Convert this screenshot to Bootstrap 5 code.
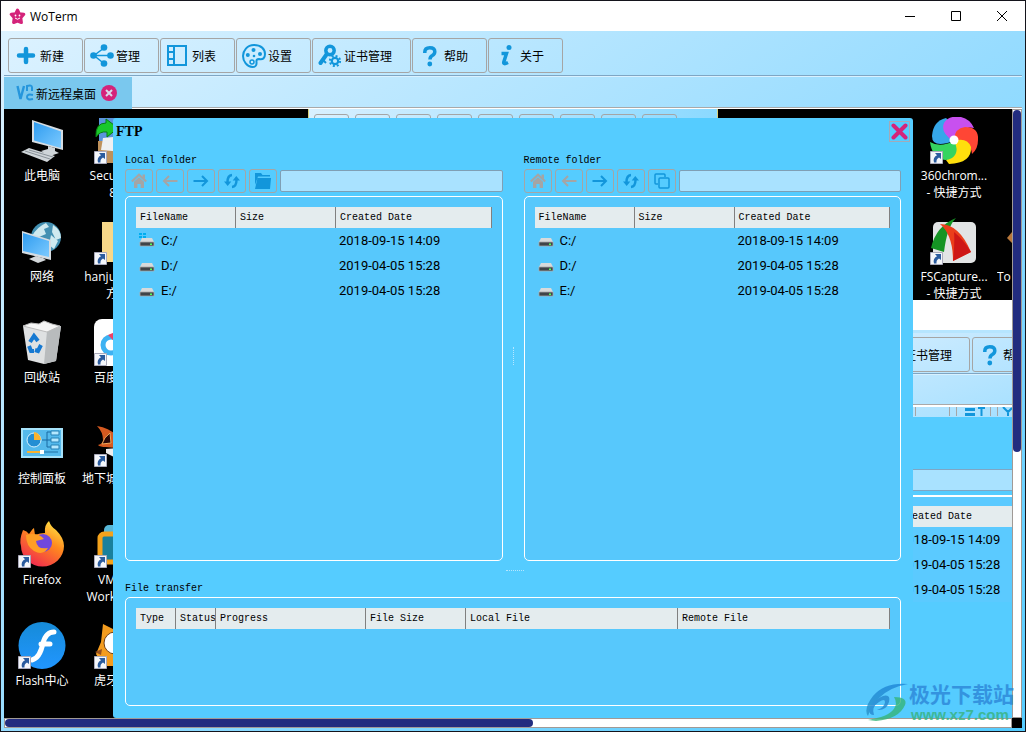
<!DOCTYPE html>
<html lang="zh-CN">
<head>
<meta charset="utf-8">
<meta name="viewport" content="width=device-width, initial-scale=1">
<title>WoTerm</title>
<link href="https://cdn.jsdelivr.net/npm/bootstrap@5.3.0/dist/css/bootstrap.min.css" rel="stylesheet">
<style>
:root { --blue: #1296db; --pink: #d4237a; --sky: #55ccff; --navy: #222c7f; }
body { font: 12px/17px "Noto Sans", "Noto Sans CJK SC", sans-serif; color: #000; }
svg { display: block; flex: none; }
button { padding: 0; }
.app-window { border: 1px solid #14141c; }
.title-bar { height: 30px; background: #fff; font-family: "Open Sans", sans-serif; font-size: 12px; padding: 0 0 0 8px; }
.caption-btn { width: 46px; height: 30px; border: 0; background: none; display: flex; align-items: center; justify-content: center; }
.app-body { background: linear-gradient(to bottom right, #ddf2ff, #97dcff 50%, #55ccff); padding: 0 3px 3px 3px; }
.tool-bar { padding: 7px 4px 2px; gap: 1px; border-bottom: 1px solid #7fa6c4; box-shadow: 0 1px #d9f1ff; margin-bottom: 1px; }
.tool-btn { width: 75px; height: 35px; border: 1px solid #a5a5a5; border-radius: 3px; background: none; color: #000; display: flex; align-items: center; gap: 2px; padding-left: 5px; white-space: nowrap; flex: none; font-family: "Noto Sans CJK SC", sans-serif; }
.tool-btn.wide { width: 99px; }
.tab-strip { height: 32px; border-bottom: 1px solid #fff; box-shadow: inset 0 -1px #a9a9a9; }
.tab-item { width: 128px; height: 32px; background: #7ac8ee; padding-left: 12px; gap: 2px; }
.tab-item a { color: #000; text-decoration: none; font-family: "Noto Sans CJK SC", sans-serif; }
.bare-btn { border: 0; background: none; margin-left: 3px; }
.screen { background: #000; min-height: 0; }
.v-track { width: 10px; background: #fff; border: 1px solid #a09a96; flex: none; }
.h-track { height: 10px; background: #fff; border: 1px solid #a09a96; }
.v-thumb { height: 342px; background: var(--navy); border-radius: 4px; }
.h-thumb { width: 52.5%; height: 8px; background: var(--navy); border-radius: 4px; }
.corner { width: 10px; height: 10px; background: #000; }
.shortcuts { position: absolute; top: 8px; width: 76px; color: #fff; text-align: center; font-family: "Open Sans", "Noto Sans CJK SC", sans-serif; white-space: nowrap; }
.shortcuts.first { left: 0; }
.shortcuts.second { left: 76px; }
.shortcuts.right { right: 20px; }
.shortcuts.edge { right: 0; width: 15px; overflow: hidden; text-align: left; }
.shortcuts.second span { display: block; width: 38px; text-align: right; }
.shortcuts.second span.latin { width: 36px; }
.shortcut { height: 101px; }
.shortcut svg { margin: 0 auto 2px; }
.remote-strip { position: absolute; left: 304px; top: 0; width: 410px; height: 14px; gap: 6px; padding: 5px 0 0 5px; overflow: hidden; border-left: 1px solid #d8d27c; border-right: 1px solid #d8d27c; background: linear-gradient(to right, #d8f0ff, #8bd9ff); }
.remote-strip i { width: 35px; height: 20px; border: 1px solid #a5a5a5; border-radius: 3px; flex: none; }
.remote-window { position: absolute; right: 0; top: 191px; bottom: 0; width: 116px; overflow: hidden; background: var(--sky); }
.remote-title { height: 30px; background: #fff; }
.remote-tools { background: linear-gradient(160deg, #cdebff, #a6e0ff); height: 87px; border-top: 3px solid #b6e5ff; }
.remote-tools .tool-bar { padding: 4px 0 1px; gap: 2px; }
.remote-tools .tool-btn { padding-left: 7px; }
.remote-tools .tool-btn.text-only { width: 74px; }
.remote-tools .tool-btn.cut { padding-left: 5px; gap: 1px; }
.remote-tabs { height: 32px; border-bottom: 2px solid #fff; box-shadow: inset 0 -1px #a9a9a9; }
.remote-field { height: 22px; border-top: 1px solid #7fa6c4; border-bottom: 1px solid #7fa6c4; background: #a9e2ff; margin-top: 52px; }
.remote-group { margin-top: 4px; border-top: 2px solid #fff; background: #5bcaff; padding-top: 9px; }
.remote-group .file-table th { border-right: 0; }
.ftp-window { position: absolute; left: 109px; right: 99px; top: 9px; bottom: 0; background: var(--sky); border-radius: 3px; padding: 0 12px 12px; }
.ftp-head { height: 33px; margin: 0 -9px; padding-top: 3px; font: bold 14px/22px "Liberation Serif", serif; }
.close-box { width: 21px; height: 21px; border: 1px solid #a3aab8; background: none; display: flex; align-items: center; justify-content: center; }
.mono, .file-table th { font-family: "Liberation Mono", monospace; font-size: 10px; font-weight: 400; }
.caption-line { height: 18px; line-height: 20px; }
.nav-tools { height: 24px; gap: 3px; margin-bottom: 3px; }
.nav-btn { width: 28px; height: 24px; border: 1px solid #a5a5a5; border-radius: 3px; background: none; color: var(--blue); display: flex; align-items: center; justify-content: center; flex: none; }
.nav-btn:disabled { color: #a5a5a5; }
.path-box { height: 22px; min-width: 0; border: 1px solid #7f9fb5; border-radius: 2px; background: #a9e2ff; padding: 0 4px; }
.group { border: 1px solid #fff; border-radius: 5px; background: #57c8fc; padding: 10px; }
.file-table { table-layout: fixed; width: 100%; border-collapse: separate; border-spacing: 0; white-space: nowrap; }
.file-table th { height: 21px; line-height: 21px; padding: 0 0 0 4px; background: #e4ecee; border-right: 1px solid #808080; overflow: hidden; }
.file-table td { height: 25px; padding: 0 0 0 3px; font-family: "Roboto", sans-serif; font-size: 13px; }
.file-table td .name { display: flex; align-items: center; gap: 6px; }
.w-40 { width: 40px; } .w-100px { width: 100px; } .w-150 { width: 150px; }
.v-split { width: 21px; flex: none; } .h-split { height: 18px; }
.v-split i { height: 18px; border-left: 1px dotted #b5e6ff; } .h-split i { width: 18px; border-top: 1px dotted #b5e6ff; margin-left: 4px; }
.transfer { height: 109px; }
.watermark { position: absolute; right: 11px; bottom: 8px; opacity: .8; gap: 1px; }
.mark-name { font: bold 21px/26px "Noto Sans CJK SC", sans-serif; color: #2c86d8; }
.mark-url { font: bold 15px/17px "Liberation Sans", sans-serif; color: #37b37e; padding-left: 2px; }
</style>
</head>
<body>
<svg width="0" height="0" class="position-absolute" aria-hidden="true">
  <defs>
    <linearGradient id="scr" x1="0" y1="0" x2="1" y2="1"><stop offset="0" stop-color="#2f9cf0"/><stop offset="1" stop-color="#7ccaff"/></linearGradient>
    <linearGradient id="fox" x1=".9" y1="0" x2=".3" y2="1"><stop offset="0" stop-color="#fff04a"/><stop offset=".45" stop-color="#ff8a1e"/><stop offset="1" stop-color="#f0284f"/></linearGradient>
    <linearGradient id="flash" x1="0" y1="0" x2="0" y2="1"><stop offset="0" stop-color="#168bd8"/><stop offset="1" stop-color="#2196ff"/></linearGradient>
    <linearGradient id="swirl" x1="0" y1="0" x2="0" y2="1"><stop offset="0" stop-color="#1e86d8"/><stop offset="1" stop-color="#2a93c8"/></linearGradient>
    <symbol id="arrow" viewBox="0 0 13 13"><path fill="#f4f6fa" stroke="#aab" d="M.5.5h12v12H.5z"/><path fill="#2a5b9e" d="M5 2h6v6L9 6.500Q6 8 6.500 11.500H4Q2.500 6.500 7 4.300z"/></symbol>
    <symbol id="home" viewBox="0 0 16 16"><path fill="none" stroke="currentColor" stroke-width="2.200" d="M.8 8.500 8 1.800l7.200 6.700"/><path fill="currentColor" d="M3 8.800 8 4.200l5 4.600V15H9.600v-4H6.400v4H3zM11.500 1.500H14V6l-2.500-2z"/></symbol>
    <symbol id="back" viewBox="0 0 16 16"><path fill="none" stroke="currentColor" stroke-width="2" d="M15.500 8H2M7 3 2 8l5 5"/></symbol>
    <symbol id="next" viewBox="0 0 16 16"><path fill="none" stroke="currentColor" stroke-width="2" d="M.5 8H14M9 3l5 5-5 5"/></symbol>
    <symbol id="sync" viewBox="0 0 16 16"><path fill="none" stroke="currentColor" stroke-width="2.400" d="M8 2Q3.500 2.500 3.500 9M8 14q4.500-.5 4.500-7"/><path fill="currentColor" d="M0 8.500h7.300L3.700 13zM8.700 7.500H16L12.300 3z"/></symbol>
    <symbol id="folder" viewBox="0 0 16 16"><path fill="currentColor" d="M0 0h6l1.500 2H15v1.500H3L0 12zM2.500 5H16l-1 11H0z"/></symbol>
    <symbol id="copy" viewBox="0 0 16 16"><path fill="none" stroke="currentColor" stroke-width="1.500" d="M4 11H2Q1 11 1 10V2q0-1 1-1h8q1 0 1 1v2M6 5h8q1 0 1 1v8q0 1-1 1H6q-1 0-1-1V6q0-1 1-1z"/></symbol>
    <symbol id="drive" viewBox="0 0 16 16"><path fill="#d8dadb" d="M3 5h10l2 4H1z"/><path fill="#404448" stroke="#aaa" stroke-width=".8" d="M1 9h14v4H1z"/><path fill="#5f5" d="M11 10.500h2V12h-2z"/></symbol>
    <symbol id="question" viewBox="0 0 24 24"><path fill="none" stroke="#1296db" stroke-width="3.500" d="M6.800 9V8q0-4.300 5-4.300 5 0 5 4 0 2.300-2.500 3.800-2.300 1.300-2.300 4"/><circle cx="11.800" cy="20" r="2.400" fill="#1296db"/></symbol>
  </defs>
</svg>

<div class="app-window d-flex flex-column vh-100 position-relative overflow-hidden">
  <header class="title-bar d-flex align-items-center">
    <svg width="17" height="17" viewBox="0 0 17 17"><path fill="#d4237a" stroke="#d4237a" stroke-width="3" stroke-linejoin="round" d="m8.500 2 1.800 3.700 4.500.6-3 3.500.6 4.700-3.900-1.500-3.900 1.500.6-4.700-3-3.500 4.500-.6z"/><circle cx="6.500" cy="7.500" r=".9" fill="#fff"/><circle cx="10.500" cy="7.500" r=".9" fill="#fff"/><path d="M6 10q2.500 2.500 5 0" stroke="#fff" fill="none"/></svg>
    <span class="ms-1 me-auto">WoTerm</span>
    <button class="caption-btn" aria-label="最小化"><svg width="12" height="12"><path stroke="#000" d="M1 6.500h10"/></svg></button>
    <button class="caption-btn" aria-label="最大化"><svg width="12" height="12"><path stroke="#000" fill="none" d="M1.500 1.500h9v9h-9z"/></svg></button>
    <button class="caption-btn" aria-label="关闭"><svg width="12" height="12"><path stroke="#000" d="m1 1 10 10M11 1 1 11"/></svg></button>
  </header>

  <div class="app-body d-flex flex-column flex-grow-1">
    <nav class="tool-bar d-flex">
      <button class="tool-btn"><svg width="24" height="24"><path stroke="#1296db" stroke-width="4.500" stroke-linecap="round" d="M12 5v13M5 11.500h14"/></svg>新建</button>
      <button class="tool-btn"><svg width="24" height="24"><path stroke="#1296db" stroke-width="1.500" fill="none" d="M14 4 4 11.500l10 8M4 11.500h17"/><g fill="#1296db"><circle cx="14" cy="3.500" r="3.300"/><circle cx="3.500" cy="11.500" r="3.300"/><circle cx="20.500" cy="11.500" r="3.300"/><circle cx="14" cy="19.500" r="3.300"/></g></svg>管理</button>
      <button class="tool-btn"><svg width="24" height="24"><path stroke="#1296db" stroke-width="2" fill="none" d="M2 2h18v19H2zM8 2v19M2 8h6M2 15h6"/></svg>列表</button>
      <button class="tool-btn"><svg width="24" height="24"><path stroke="#1296db" stroke-width="2" fill="none" d="M12 1c7 0 11 4 11 9 0 4-2 6-6 5q-3 0-2.500 3 .5 5-4 5C5 23 1 17 1 12S5 1 12 1z"/><g fill="#1296db"><circle cx="11.500" cy="6" r="2"/><circle cx="5.800" cy="11" r="2"/><circle cx="18" cy="10" r="2"/><circle cx="12" cy="12" r="1.300"/></g><circle cx="10" cy="18" r="2" stroke="#1296db" stroke-width="1.500" fill="none"/></svg>设置</button>
      <button class="tool-btn wide"><svg width="24" height="24"><path stroke="#1296db" stroke-width="4" fill="none" stroke-linecap="round" d="M8.500 10.500 2.500 19"/><circle cx="12" cy="6.500" r="4.200" stroke="#1296db" stroke-width="3.500" fill="none"/><path stroke="#1296db" stroke-width="2" d="m5 16 3 3"/><circle cx="17" cy="17" r="3.200" fill="none" stroke="#1296db" stroke-width="2.200"/><circle cx="17" cy="17" r="5.100" fill="none" stroke="#1296db" stroke-width="2" stroke-dasharray="2 2"/></svg>证书管理</button>
      <button class="tool-btn"><svg width="24" height="24"><use href="#question"/></svg>帮助</button>
      <button class="tool-btn"><svg width="24" height="24"><circle cx="15" cy="3.500" r="2.500" fill="#1296db"/><path stroke="#1296db" stroke-width="3.500" fill="none" d="M7.500 9.500h5L9.800 18q-.8 3 4.200.5"/></svg>关于</button>
    </nav>

    <div class="tab-strip d-flex mx-0">
      <div class="tab-item d-flex align-items-center">
        <svg width="18" height="18" fill="none" stroke="#2596dc" stroke-width="2.400"><path d="m1.500 2 3 13L8 2"/><path stroke-width="2" d="M11 7V2q5-1.500 5 1.500V7M17 11q-6-1.500-6 2t6 2"/></svg>
        <a href="#">新远程桌面</a>
        <button class="bare-btn" aria-label="关闭标签"><svg width="16" height="16"><circle cx="8" cy="8" r="8" fill="#d4237a"/><path stroke="#d9d9ea" stroke-width="2" d="m5 5 6 6M11 5l-6 6"/></svg></button>
      </div>
    </div>

    <div class="d-flex flex-grow-1">
      <main class="screen position-relative flex-grow-1 overflow-hidden">
        <div class="shortcuts first">
          <div class="shortcut"><svg width="48" height="48"><path fill="#d7dde2" d="m14 3 31 10v20L14 25z"/><path fill="url(#scr)" d="m16 5 27 9.500V31L16 23.500z"/><path fill="#cfd5d9" d="m30 29 7 2v3l4 2-9 3-9-5 7-2zM3 35l8-4 26 8-8 6z"/><path stroke="#8a9299" d="m7 34 25 8M11 33l24 7"/></svg><span>此电脑</span></div>
          <div class="shortcut"><svg width="48" height="48"><circle cx="28" cy="19" r="15" fill="#4390b2"/><path fill="#cfeaf0" d="M14 18q5-9 14-13l3 4-5 2 2 5-7 3-2 5zM35 7q8 5 8 13l-5 2-4-8zM33 17l7 6-4 8-5-4z"/><path fill="#d5dce2" d="m4 13 29 9v20L4 35z"/><path fill="url(#scr)" d="m5 15 26 8v16L5 33z"/><path fill="#d3d7da" d="m18 38 7 2 3 2-8 3-9-4z"/></svg><span>网络</span></div>
          <div class="shortcut"><svg width="48" height="48"><path fill="#dfe1e2" d="m5 7 38 0-5 35-12 3-16-4z"/><path fill="#b8bbbd" d="m29 12 14-5-5 35-12 3z"/><path fill="#f6f6f6" stroke="#bbb" d="m5 7 8-3 8 1 5-3 8 3 8 2-13 6z"/><path fill="none" stroke="#1679d2" stroke-width="4" d="m12 23 4-6 4 5M23 26l-3 6-3-1M11 27l2 5h3"/></svg><span>回收站</span></div>
          <div class="shortcut"><svg width="48" height="48"><path fill="#54b9ec" stroke="#a6e2fa" stroke-width="2" d="M4 9h40v28H4z"/><circle cx="16" cy="20" r="7" fill="#248ed3" stroke="#d7f3ff"/><path fill="#f9b32f" d="M16 20v-8a8 8 0 0 1 7 8z"/><path stroke="#196ba3" fill="none" d="M24 20h5v-8h4M29 20h4M29 20v7h4"/><path fill="#b4e8ff" stroke="#2781b5" d="M33 11h8v4h-8zM33 18h8v4h-8zM33 25h8v4h-8z"/><path stroke="#f9b32f" stroke-width="2" d="M9 32h14"/><path stroke="#1f70a4" d="M24 32h16"/><path fill="#fff" d="M22 30h4v4h-4z"/></svg><span>控制面板</span></div>
          <div class="shortcut"><svg width="48" height="48"><path fill="url(#fox)" d="M5 9q4 1 6 4 4-6 5-6l1 7q5-2 10-2-1-8 4-12 2 6 7 9 8 8 8 16a21 20 0 0 1-43 0Q1 19 5 9z"/><circle cx="25" cy="22" r="9" fill="#7148dd"/><path fill="#ff9e25" d="M8 14q12-3 18 4l-8 2q1 9 12 7-5 8-14 3Q8 25 8 14z"/><use href="#arrow" y="34" width="13" height="13"/></svg><span>Firefox</span></div>
          <div class="shortcut"><svg width="48" height="48"><circle cx="24" cy="23.500" r="23.500" fill="url(#flash)"/><path fill="none" stroke="#fff" stroke-width="5" stroke-linecap="round" d="M36 10q-8 0-11 11-3 15-11 17M23 22h9"/><use href="#arrow" y="34" width="13" height="13"/></svg><span>Flash中心</span></div>
        </div>
        <div class="shortcuts second">
          <div class="shortcut"><svg width="48" height="48"><path fill="#5a94dc" d="M5 1h40v30H5z"/><path fill="#be915b" d="M4 24h42v22H4z"/><path fill="#eef0f2" d="m9 21 20-2v16L7 33z"/><path fill="#19c82a" stroke="#087c12" d="M2 20Q1 6 12 6V2l12 9-11 9v-5q-7-1-11 5z"/><use href="#arrow" y="34" width="13" height="13"/></svg><span class="latin">Secu</span><span class="latin">8</span></div>
          <div class="shortcut"><svg width="48" height="48"><path fill="#f7d889" d="M8 4h26v40H8z"/><use href="#arrow" y="34" width="13" height="13"/></svg><span class="latin">hanju</span><span>方</span></div>
          <div class="shortcut"><svg width="48" height="48"><rect width="48" height="47" rx="8" fill="#fff"/><circle cx="17" cy="26" r="8" fill="none" stroke="#3eb2f2" stroke-width="5"/><path fill="#ee4266" d="m14 16 7-3v10z"/><use href="#arrow" y="34" width="13" height="13"/></svg><span>百度</span></div>
          <div class="shortcut"><svg width="48" height="48"><path fill="#d65a20" d="M3 6q12 2 19 9v13l-10-1q-6 0-8-2 5-1 5-5 0-8-6-14z"/><path fill="#270606" stroke="#f1a85a" d="M8 24q2-7 8-11l1 10z"/><path fill="#eee" d="m12 29 12-1-4 9-8-4z"/><use href="#arrow" y="34" width="13" height="13"/></svg><span>地下城</span></div>
          <div class="shortcut"><svg width="48" height="48"><rect x="10" y="4" width="28" height="28" rx="5" fill="#57b7d7"/><rect x="6" y="13" width="34" height="28" rx="4" fill="#19809c" stroke="#f4a21b" stroke-width="5"/><use href="#arrow" y="34" width="13" height="13"/></svg><span class="latin">VM</span><span class="latin">Work</span></div>
          <div class="shortcut"><svg width="48" height="48"><path fill="#f39c1f" d="m9 2 12 6h22v36H9L2 32l5-12z"/><circle cx="21" cy="21" r="11" fill="#fff" stroke="#713e12"/><path fill="#96501f" d="m1 30 7-3-1 6z"/><use href="#arrow" y="34" width="13" height="13"/></svg><span>虎牙</span></div>
        </div>
        <div class="shortcuts right">
          <div class="shortcut"><svg width="48" height="48"><path fill="#36a7e9" d="M24 24Q2 32 2 19 3 4 16 1l8 8z"/><path fill="#c850ef" d="M23 24Q10 15 14 6q5-8 17-6 9 2 13 11-12-3-16 11z"/><path fill="#ff4635" d="M25 24q-2-12 10-14 14 0 13 13 0 9-6 14-1-13-17-13z"/><path fill="#ffdf0d" d="M24 24q13-4 17 6 1 16-22 17l-3-4q9-6 8-19z"/><path fill="#35d45f" d="M24 24q6 11-2 17-9 5-17-3-4-5-5-13 10 6 24-1z"/><circle cx="24" cy="23" r="4.500" fill="#fff"/><use href="#arrow" y="34" width="13" height="13"/></svg>360chrom...<br>- 快捷方式</div>
          <div class="shortcut"><svg width="48" height="48"><rect x="3" y="4" width="43" height="41" rx="5" fill="#e2e4e5"/><path fill="#159424" d="M1 30Q6 8 26 0q-9 9-12 34z"/><path fill="#eb3e1b" d="M10 6Q29 6 41 34l-18 9Q23 17 10 6z"/><path fill="#ce1716" d="M24 14q10 8 17 20l-18 9q2-20 1-29z"/><use href="#arrow" y="34" width="13" height="13"/></svg>FSCapture...<br>- 快捷方式</div>
        </div>
        <div class="shortcuts edge">
          <div class="shortcut"></div>
          <div class="shortcut"><svg class="me-0" width="6" height="48"><path fill="#b9783b" d="M6 14 1 20l5 5z"/></svg>To</div>
        </div>

        <div class="remote-strip d-flex"><i></i><i></i><i></i><i></i><i></i><i></i><i></i><i></i><i></i></div>

        <section class="remote-window">
          <div class="remote-title"></div>
          <div class="remote-tools">
            <div class="tool-bar d-flex"><button class="tool-btn text-only">证书管理</button><button class="tool-btn cut"><svg width="24" height="24"><use href="#question"/></svg>帮</button></div>
            <div class="remote-tabs"></div>
            <svg width="116" height="9" fill="none"><path stroke="#a5a5a5" d="M19.500 0v9M53.500 0v9M60.500 0v9M94.500 0v9M101.500 0v9"/><path stroke="#1296db" stroke-width="3" d="M69 2.500h10M69 7.500h10"/><path stroke="#1296db" stroke-width="2" d="M82 1h7M85.500 1v8M107 0l5 5 4-4M112 3v6"/></svg>
          </div>
          <div class="remote-field"></div>
          <div class="remote-group">
            <table class="file-table"><thead><tr><th>Created Date</th></tr></thead><tbody><tr><td>2018-09-15 14:09</td></tr><tr><td>2019-04-05 15:28</td></tr><tr><td>2019-04-05 15:28</td></tr></tbody></table>
          </div>
        </section>

        <section class="ftp-window d-flex flex-column" aria-label="FTP">
          <div class="ftp-head d-flex justify-content-between"><span>FTP</span><button class="close-box" aria-label="Close"><svg width="17" height="17"><path stroke="#d4237a" stroke-width="4" stroke-linecap="round" d="m2.500 2.500 12 12M14.500 2.500l-12 12"/></svg></button></div>
          <div class="d-flex flex-grow-1">
            <div class="d-flex flex-column flex-fill w-50">
              <label class="mono caption-line" for="local">Local folder</label>
              <div class="nav-tools d-flex align-items-center">
                <button class="nav-btn" disabled aria-label="Home"><svg width="16" height="16"><use href="#home"/></svg></button>
                <button class="nav-btn" disabled aria-label="Back"><svg width="16" height="16"><use href="#back"/></svg></button>
                <button class="nav-btn" aria-label="Forward"><svg width="16" height="16"><use href="#next"/></svg></button>
                <button class="nav-btn" aria-label="Refresh"><svg width="16" height="16"><use href="#sync"/></svg></button>
                <button class="nav-btn" aria-label="Browse"><svg width="16" height="16"><use href="#folder"/></svg></button>
                <input id="local" class="path-box flex-grow-1" type="text">
              </div>
              <div class="group flex-grow-1">
                <table class="file-table">
                  <thead><tr><th class="w-100px">FileName</th><th class="w-100px">Size</th><th>Created Date</th></tr></thead>
                  <tbody>
                    <tr><td><span class="name"><svg width="16" height="16"><use href="#drive"/><path fill="#00adef" d="M0 0h3v2H0zM4 0h3v2H4zM0 3h3v2H0zM4 3h3v2H4z"/></svg>C:/</span></td><td></td><td>2018-09-15 14:09</td></tr>
                    <tr><td><span class="name"><svg width="16" height="16"><use href="#drive"/></svg>D:/</span></td><td></td><td>2019-04-05 15:28</td></tr>
                    <tr><td><span class="name"><svg width="16" height="16"><use href="#drive"/></svg>E:/</span></td><td></td><td>2019-04-05 15:28</td></tr>
                  </tbody>
                </table>
              </div>
            </div>
            <div class="v-split d-flex align-items-center justify-content-center"><i></i></div>
            <div class="d-flex flex-column flex-fill w-50">
              <label class="mono caption-line" for="remote">Remote folder</label>
              <div class="nav-tools d-flex align-items-center">
                <button class="nav-btn" disabled aria-label="Home"><svg width="16" height="16"><use href="#home"/></svg></button>
                <button class="nav-btn" disabled aria-label="Back"><svg width="16" height="16"><use href="#back"/></svg></button>
                <button class="nav-btn" aria-label="Forward"><svg width="16" height="16"><use href="#next"/></svg></button>
                <button class="nav-btn" aria-label="Refresh"><svg width="16" height="16"><use href="#sync"/></svg></button>
                <button class="nav-btn" aria-label="Copy"><svg width="16" height="16"><use href="#copy"/></svg></button>
                <input id="remote" class="path-box flex-grow-1" type="text">
              </div>
              <div class="group flex-grow-1">
                <table class="file-table">
                  <thead><tr><th class="w-100px">FileName</th><th class="w-100px">Size</th><th>Created Date</th></tr></thead>
                  <tbody>
                    <tr><td><span class="name"><svg width="16" height="16"><use href="#drive"/></svg>C:/</span></td><td></td><td>2018-09-15 14:09</td></tr>
                    <tr><td><span class="name"><svg width="16" height="16"><use href="#drive"/></svg>D:/</span></td><td></td><td>2019-04-05 15:28</td></tr>
                    <tr><td><span class="name"><svg width="16" height="16"><use href="#drive"/></svg>E:/</span></td><td></td><td>2019-04-05 15:28</td></tr>
                  </tbody>
                </table>
              </div>
            </div>
          </div>
          <div class="h-split d-flex align-items-center justify-content-center"><i></i></div>
          <div class="mono caption-line">File transfer</div>
          <div class="group transfer">
            <table class="file-table">
              <thead><tr><th class="w-40">Type</th><th class="w-40">Status</th><th class="w-150">Progress</th><th class="w-100px">File Size</th><th>Local File</th><th>Remote File</th></tr></thead>
            </table>
          </div>
        </section>
      </main>
      <div class="v-track"><div class="v-thumb"></div></div>
    </div>
    <div class="d-flex">
      <div class="h-track flex-grow-1"><div class="h-thumb"></div></div>
      <div class="corner"></div>
    </div>
  </div>

  <div class="watermark d-flex align-items-center">
    <svg width="42" height="38"><path fill="url(#swirl)" d="M42 1Q19-1 7 13-3 26 2 33q3-10 11-18Q24 4 42 1z"/><path fill="#2688d0" d="M3 27q3-10 14-14 8-2 6 6-3 9-12 8 8-3 8-8 0-4-6 0Q5 24 8 32q-5 0-5-5z"/><path fill="#36b57a" d="M28 14q14 0 11 8-6 14-29 16l-8-1 9-2q17-4 19-14 0-4-2-7z"/></svg>
    <div><div class="mark-name">极光下载站</div><div class="mark-url">www.xz7.com</div></div>
  </div>
</div>
<script src="https://cdn.jsdelivr.net/npm/bootstrap@5.3.0/dist/js/bootstrap.bundle.min.js"></script>
</body>
</html>
